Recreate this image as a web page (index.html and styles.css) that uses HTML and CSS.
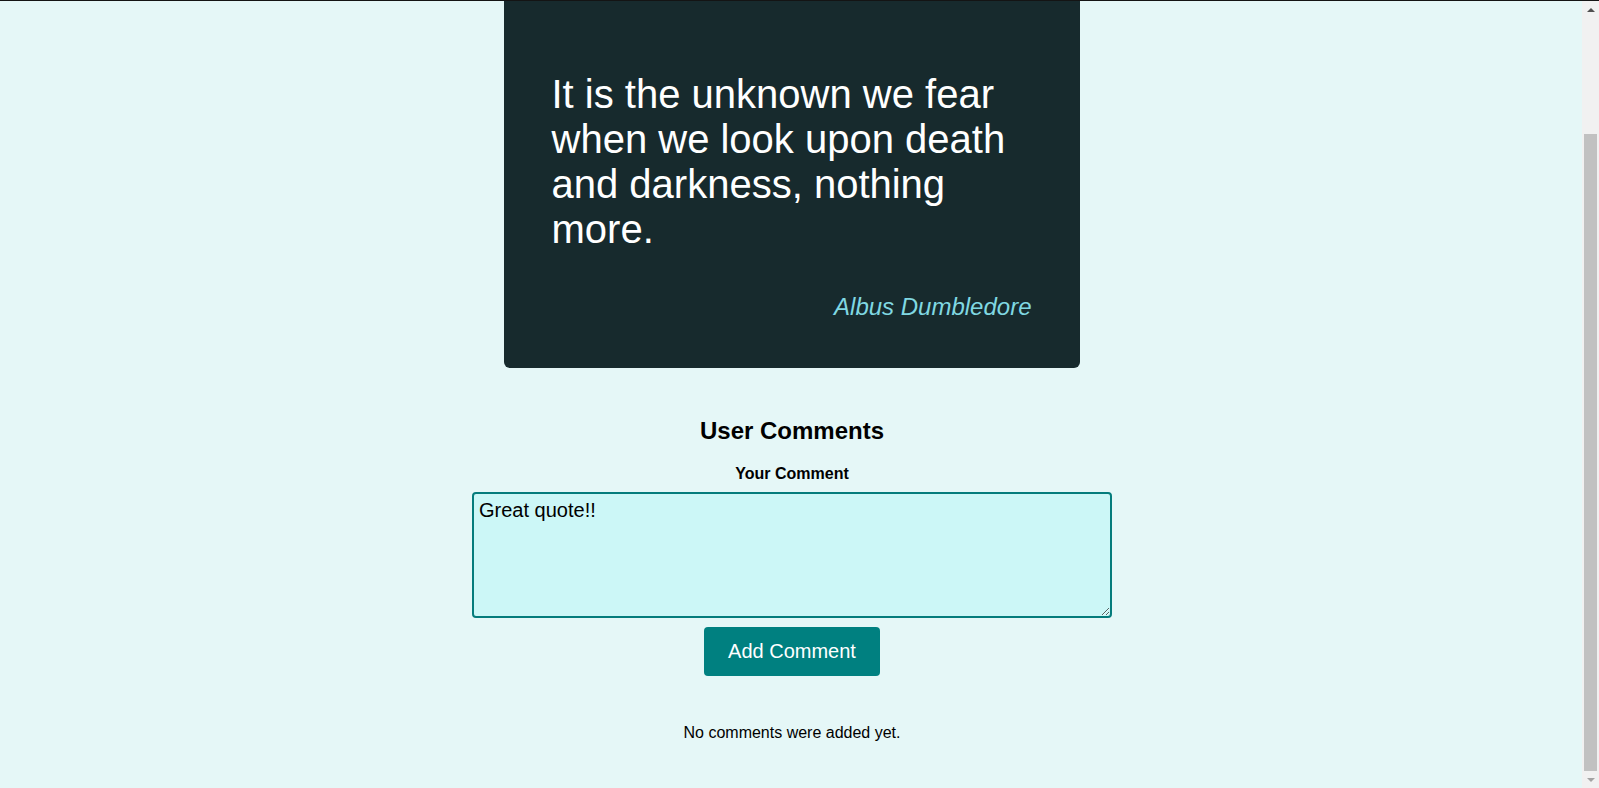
FILE: index.html
```html
<!DOCTYPE html>
<html lang="en">
<head>
<meta charset="utf-8">
<title>Quote</title>
<link rel="stylesheet" href="styles.css">
</head>
<body>
<div class="viewport">
  <main class="page">
    <article class="quote-card">
      <p class="quote-text">It is the unknown we fear when we look upon death and darkness, nothing more.</p>
      <p class="quote-author">Albus Dumbledore</p>
    </article>

    <section class="comments">
      <h2 class="comments-title">User Comments</h2>
      <form class="comment-form">
        <label class="comment-label" for="comment">Your Comment</label>
        <textarea class="comment-input" id="comment">Great quote!!</textarea>
        <button class="comment-button" type="button">Add Comment</button>
      </form>
      <p class="comments-empty">No comments were added yet.</p>
    </section>
  </main>

  <div class="scrollbar" aria-hidden="true">
    <div class="scroll-btn"><span class="arrow-up"></span></div>
    <div class="scroll-track"><div class="scroll-thumb"></div></div>
    <div class="scroll-btn"><span class="arrow-down"></span></div>
  </div>
</div>
</body>
</html>
```

FILE: styles.css
```css
html, body {
  margin: 0;
  padding: 0;
  height: 100%;
  overflow: hidden;
}

body {
  background: #e5f7f7;
  font-family: "Liberation Sans", Arial, sans-serif;
  color: #000;
}

.viewport {
  box-sizing: border-box;
  height: 788px;
  border-top: 1px solid #141414;
  display: grid;
  grid-template-columns: 1fr 17px;
}

.page {
  display: flex;
  flex-direction: column;
  align-items: center;
  min-width: 0;
}

/* Quote card */
.quote-card {
  box-sizing: border-box;
  width: 576px;
  margin-left: 1px;
  padding: 71px 48px 47px;
  background: #172a2d;
  border-radius: 0 0 6px 6px;
}

.quote-text {
  margin: 0;
  color: #ffffff;
  font-size: 40px;
  line-height: 45px;
}

.quote-author {
  margin: 41px 0 0;
  color: #80d8e2;
  font-size: 24px;
  font-style: italic;
  line-height: 27.6px;
  text-align: right;
}

/* Comments */
.comments {
  display: flex;
  flex-direction: column;
  align-items: center;
  padding-left: 2px;
}

.comments-title {
  margin: 49px 0 0;
  font-size: 24px;
  font-weight: bold;
  line-height: 28px;
}

.comment-form {
  display: flex;
  flex-direction: column;
  align-items: center;
}

.comment-label {
  margin-top: 20px;
  font-size: 16px;
  font-weight: bold;
  line-height: 18px;
}

.comment-input {
  box-sizing: border-box;
  width: 640px;
  height: 126px;
  margin: 9px 0 0;
  padding: 5px 5px 4px;
  border: 2px solid #057c7c;
  border-radius: 4px;
  background: #ccf7f7;
  color: #000;
  font-family: "Liberation Sans", Arial, sans-serif;
  font-size: 20px;
  line-height: 23px;
  outline: none;
  resize: vertical;
}

.comment-button {
  box-sizing: border-box;
  height: 49px;
  margin-top: 9px;
  padding: 0 24.5px;
  border: none;
  border-radius: 4px;
  background: #008080;
  color: #ffffff;
  font-family: "Liberation Sans", Arial, sans-serif;
  font-size: 20px;
  cursor: pointer;
}

.comments-empty {
  margin: 48px 0 0;
  font-size: 16px;
  line-height: 18px;
}

/* Classic scrollbar (page shown scrolled to the bottom) */
.scrollbar {
  display: flex;
  flex-direction: column;
  background: #f1f1f1;
}

.scroll-btn {
  height: 17px;
  flex: none;
  display: flex;
  align-items: center;
  justify-content: center;
}

.arrow-up {
  width: 0;
  height: 0;
  border-left: 4px solid transparent;
  border-right: 4px solid transparent;
  border-bottom: 4px solid #505050;
}

.arrow-down {
  width: 0;
  height: 0;
  border-left: 4px solid transparent;
  border-right: 4px solid transparent;
  border-top: 4px solid #a3a3a3;
}

.scroll-track {
  flex: 1;
  display: flex;
  flex-direction: column;
  justify-content: flex-end;
}

.scroll-thumb {
  height: 637px;
  margin: 0 2px;
  background: #c1c1c1;
}
```
